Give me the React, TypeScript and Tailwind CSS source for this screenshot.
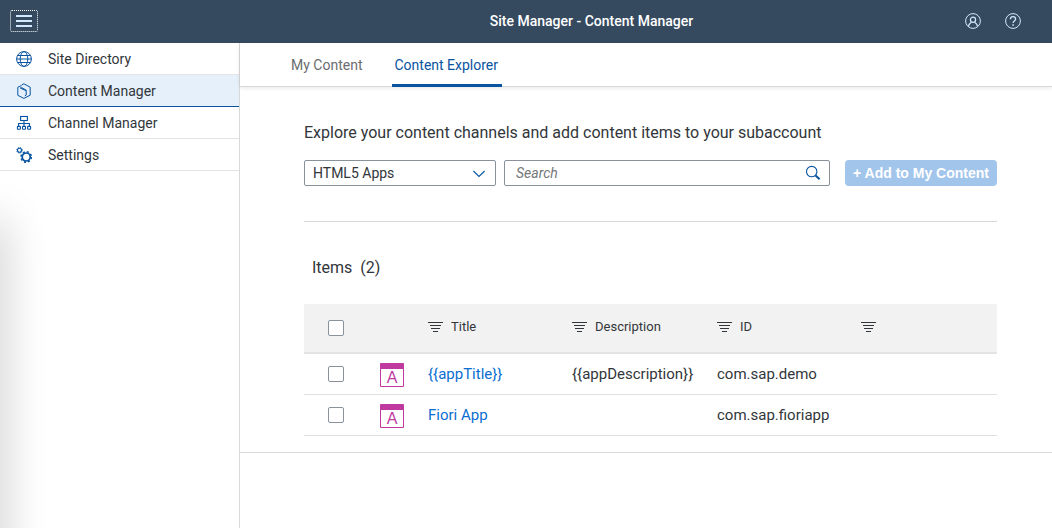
import type { ReactNode } from "react";

type IconProps = { className?: string };

function GlobeIcon() {
  return (
    <svg viewBox="0 0 16 16" className="size-4" fill="none" stroke="currentColor" aria-hidden="true">
      <circle cx="8" cy="8" r="7.4" />
      <ellipse cx="8" cy="8" rx="3.8" ry="7.4" />
      <path d="M1.8 4.5h12.4M.6 8h14.8M1.8 11.5h12.4" />
    </svg>
  );
}

function ContentIcon() {
  return (
    <svg viewBox="0 0 16 16" className="size-4" fill="none" stroke="currentColor" aria-hidden="true">
      <path d="M5.6 2.4 1.8 4.3v8L7.9 15.4l6.300-3.200V4.200L7.900.8l-2.100 1" />
      <path d="M4.200 5.100 5.400 4.500l4.800 2.600v5l-1.400.8" />
      <path d="M4.400 5.100 9.800 7.600" />
    </svg>
  );
}

function ChannelIcon() {
  return (
    <svg viewBox="0 0 16 16" className="size-4" fill="none" stroke="currentColor" strokeWidth="1.1" aria-hidden="true">
      <rect x="4.6" y="1.5" width="6.8" height="4" />
      <path d="M8 5.5v5.5M2.6 11V8.500h10.800V11" />
      <rect x="1.400" y="11.400" width="3" height="2.900" rx=".6" />
      <rect x="6.500" y="11.400" width="3" height="2.900" rx=".6" />
      <rect x="11.600" y="11.400" width="3" height="2.900" rx=".6" />
    </svg>
  );
}

function SettingsIcon() {
  return (
    <svg viewBox="0 0 16 16" className="size-4" fill="none" stroke="currentColor" aria-hidden="true">
      <circle cx="3.5" cy="3.3" r="2" strokeWidth="1.1" />
      <circle cx="3.5" cy="3.3" r="2.8" strokeWidth="1" strokeDasharray="1.1 1.1" />
      <circle cx="10.2" cy="10" r="4" strokeWidth="1.7" />
      <circle cx="10.2" cy="10" r="5.2" strokeWidth="1.5" strokeDasharray="2.04 2.04" />
    </svg>
  );
}

function UserIcon() {
  return (
    <svg viewBox="0 0 16 16" className="size-4" fill="none" stroke="currentColor" aria-hidden="true">
      <circle cx="8" cy="8" r="7.4" />
      <circle cx="8" cy="6.8" r="2.6" strokeWidth="1.2" />
      <path d="M3.4 13.600c.3-2.300 1.600-3.600 3-4.400M12.600 13.600c-.3-2.300-1.600-3.600-3-4.400" strokeWidth="1.2" />
    </svg>
  );
}

function HelpIcon() {
  return (
    <svg viewBox="0 0 16 16" className="size-4" fill="none" stroke="currentColor" aria-hidden="true">
      <circle cx="8" cy="8" r="7.4" />
      <path d="M5.4 6.2c0-1.600 1-2.500 2.600-2.500s2.600.9 2.600 2.300c0 1.900-2.500 1.900-2.500 3.900" strokeWidth="1.3" />
      <path d="M7.300 11.300h1.500v1.400H7.300z" fill="currentColor" stroke="none" />
    </svg>
  );
}

function SearchIcon() {
  return (
    <svg viewBox="0 0 16 16" className="size-4" fill="none" stroke="currentColor" aria-hidden="true">
      <circle cx="6.7" cy="6.6" r="5.2" strokeWidth="1.1" />
      <path d="m10.600 10.500 4 3.800" strokeWidth="2" />
    </svg>
  );
}

function ChevronIcon({ className }: IconProps) {
  return (
    <svg viewBox="0 0 12 8" className={className} fill="none" stroke="currentColor" strokeWidth="1.1" aria-hidden="true">
      <path d="m.4 1 5.600 5.500L11.600 1" />
    </svg>
  );
}

function FilterIcon() {
  return (
    <svg viewBox="0 0 15 10" className="mb-[2px] h-[10px] w-[15px] shrink-0" fill="currentColor" aria-hidden="true">
      <path d="M0 0h15v1H0zM2 3h11v1H2zM3 6h9v1H3zM5 9h5v1H5z" />
    </svg>
  );
}

const navItems: { label: string; icon: ReactNode; active?: boolean }[] = [
  { label: "Site Directory", icon: <GlobeIcon /> },
  { label: "Content Manager", icon: <ContentIcon />, active: true },
  { label: "Channel Manager", icon: <ChannelIcon /> },
  { label: "Settings", icon: <SettingsIcon /> },
];

const rows = [
  { title: "{{appTitle}}", description: "{{appDescription}}", id: "com.sap.demo" },
  { title: "Fiori App", description: "", id: "com.sap.fioriapp" },
];

const columns = ["Title", "Description", "ID", ""];

function Checkbox({ label }: { label: string }) {
  return (
    <input
      type="checkbox"
      aria-label={label}
      className="block size-4 appearance-none rounded-xs border border-[#89919a] bg-white checked:bg-[#0854a0]"
    />
  );
}

export default function App() {
  return (
    <div className="flex min-h-screen flex-col bg-white font-['Roboto','Liberation_Sans',sans-serif] text-sm text-[#32363a]">
      <header className="flex h-[43px] items-center bg-[#354a5f] pr-[31px] pb-px pl-[10px] text-[#d1e8ff]">
        <button
          type="button"
          aria-label="Menu"
          className="flex h-[22px] w-7 flex-col items-center justify-center gap-[3px] rounded-xs border border-dotted border-white"
        >
          <span className="h-[2px] w-4 bg-current" />
          <span className="h-[2px] w-4 bg-current" />
          <span className="h-[2px] w-4 bg-current" />
        </button>
        <h1 className="flex-1 pl-[180px] text-center font-medium text-white">Site Manager - Content Manager</h1>
        <div className="flex justify-end gap-6">
          <button type="button" aria-label="User">
            <UserIcon />
          </button>
          <button type="button" aria-label="Help">
            <HelpIcon />
          </button>
        </div>
      </header>

      <div className="flex flex-1">
        <aside className="flex w-60 shrink-0 flex-col overflow-hidden border-r border-[#d9d9d9]">
          <nav aria-label="Main">
            {navItems.map((item) => (
              <a
                key={item.label}
                href="#"
                aria-current={item.active ? "page" : undefined}
                className={
                  item.active
                    ? "flex h-8 items-center gap-4 border-b border-[#0854a0] bg-[#e5f0fa] px-4"
                    : "flex h-8 items-center gap-4 border-b border-[#e4e4e4] px-4"
                }
              >
                <span className="text-[#0854a0]">{item.icon}</span>
                {item.label}
              </a>
            ))}
          </nav>
          <div className="flex-1 overflow-hidden pt-10">
            <div className="-ml-5 h-[calc(100%+60px)] w-5 shadow-[0_10px_44px_0_rgba(0,0,0,0.3)]" />
          </div>
        </aside>

        <main className="min-w-0 flex-1">
          <div
            role="tablist"
            className="flex h-11 gap-7 border-b border-[#d9d9d9] pl-[49px] shadow-[0_1px_4px_rgba(0,0,0,0.1)]"
          >
            <button type="button" role="tab" aria-selected="false" className="px-[2px] pt-px text-[#6a6d70]">
              My Content
            </button>
            <button
              type="button"
              role="tab"
              aria-selected="true"
              className="-mb-px rounded-t-xs border-b-[3px] border-[#0854a0] pt-[3px] pr-1 pl-[2px] text-[#0854a0]"
            >
              Content Explorer
            </button>
          </div>

          <section className="border-b border-[#d9d9d9] pt-[34px] pr-[55px] pb-4 pl-16">
            <p className="text-base leading-6">Explore your content channels and add content items to your subaccount</p>

            <div className="mt-[15px] flex">
              <div className="relative w-48 shrink-0">
                <select
                  aria-label="Content channel"
                  className="h-[26px] w-full appearance-none rounded-xs border border-[#89919a] bg-white px-2"
                >
                  <option>HTML5 Apps</option>
                </select>
                <ChevronIcon className="pointer-events-none absolute top-[10px] right-[11px] h-2 w-3 text-[#0854a0]" />
              </div>
              <form className="ml-2 flex h-[26px] min-w-0 flex-1 items-center rounded-xs border border-[#89919a] pr-2 pl-[11px]">
                <input
                  type="search"
                  aria-label="Search"
                  placeholder="Search"
                  className="min-w-0 flex-1 bg-transparent outline-none placeholder:text-[#74777a] placeholder:italic"
                />
                <button type="button" aria-label="Start search" className="text-[#0854a0]">
                  <SearchIcon />
                </button>
              </form>
              <button
                type="button"
                disabled
                className="ml-[15px] h-[26px] w-[152px] shrink-0 rounded bg-[#a2c5eb] font-['Liberation_Sans',sans-serif] font-bold text-white"
              >
                + Add to My Content
              </button>
            </div>

            <hr className="mt-[35px] border-[#d9d9d9]" />

            <h2 className="mt-[34px] pl-2 text-base leading-6 whitespace-pre">Items  (2)</h2>

            <table className="mt-6 w-full table-fixed border-separate border-spacing-0 text-left">
              <colgroup>
                <col className="w-[68px]" />
                <col className="w-12" />
                <col className="w-36" />
                <col className="w-[145px]" />
                <col className="w-36" />
                <col />
              </colgroup>
              <thead>
                <tr className="h-[50px] bg-[#f2f2f2]">
                  <th scope="col" className="border-b-2 border-[#e4e4e4] pl-6">
                    <Checkbox label="Select all items" />
                  </th>
                  <th scope="col" aria-label="Type" className="border-b-2 border-[#e4e4e4]" />
                  {columns.map((name) => (
                    <th
                      key={name}
                      scope="col"
                      aria-label={name || "Status"}
                      className="border-b-2 border-[#e4e4e4] pb-px pl-2 font-normal"
                    >
                      <span className="flex items-center gap-2 text-[13px]">
                        <FilterIcon />
                        {name}
                      </span>
                    </th>
                  ))}
                </tr>
              </thead>
              <tbody className="text-[15px]">
                {rows.map((row) => (
                  <tr key={row.id} className="h-[41px]">
                    <td className="border-b border-[#e0e0e0] pl-6">
                      <Checkbox label={`Select ${row.title}`} />
                    </td>
                    <td className="border-b border-[#e0e0e0] pt-[2px] pl-2">
                      <span className="flex size-6 items-center justify-center rounded-[1px] border border-t-[6px] border-[#c0399f] font-['Liberation_Sans',sans-serif] text-base leading-4 text-[#c0399f]">
                        A
                      </span>
                    </td>
                    <td className="border-b border-[#e0e0e0] pt-[2px] pl-2">
                      <a href="#" className="text-[#0a6ed1]">
                        {row.title}
                      </a>
                    </td>
                    <td className="border-b border-[#e0e0e0] pt-[2px] pl-2">{row.description}</td>
                    <td className="border-b border-[#e0e0e0] pt-[2px] pl-2">{row.id}</td>
                    <td className="border-b border-[#e0e0e0]" />
                  </tr>
                ))}
              </tbody>
            </table>
          </section>
        </main>
      </div>
    </div>
  );
}
